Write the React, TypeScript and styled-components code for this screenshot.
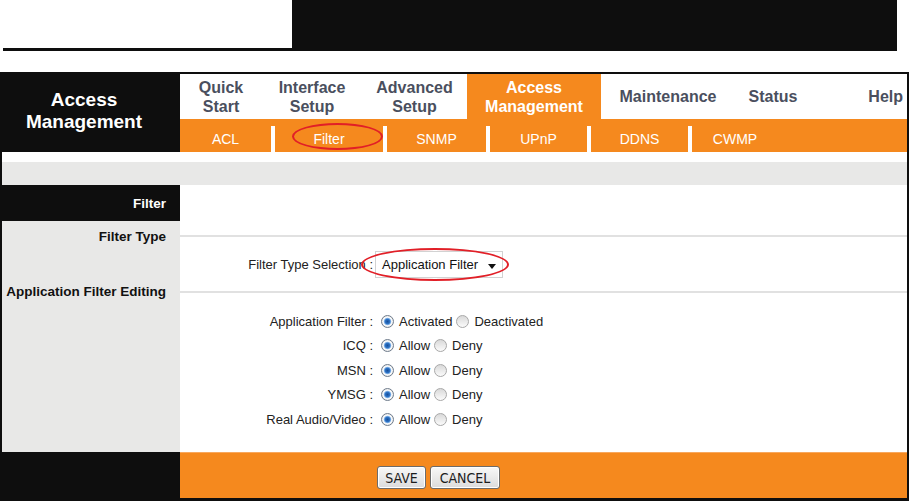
import React from "react";
import styled, { createGlobalStyle } from "styled-components";

const black = "#0e0e0e";
const orange = "#f5891e";
const panelGrey = "#e8e8e7";
const ruleGrey = "#e1e1e1";
const tabText = "#4a4f5e";
const red = "#e11f27";

const GlobalStyle = createGlobalStyle`
  body {
    margin: 0;
    background: #fff;
    font-family: "Liberation Sans", Arial, sans-serif;
  }
`;

const Page = styled.div`
  width: 910px;
  height: 501px;
  overflow: hidden;
`;

const Banner = styled.div`
  display: flex;
  height: 48px;
`;

const BannerBlank = styled.div`
  width: 292px;
`;

const BannerBlock = styled.div`
  width: 605px;
  background: ${black};
`;

const BannerRule = styled.div`
  margin: 0 0 21px 3px;
  width: 894px;
  height: 3px;
  background: ${black};
`;

const Frame = styled.div`
  width: 909px;
  box-sizing: border-box;
  border: 2px solid ${black};
  border-bottom-width: 3px;
`;

const Header = styled.div`
  display: grid;
  grid-template-columns: 178px 1fr;
  grid-template-rows: 45px 33px;
`;

const Title = styled.div`
  grid-row: 1 / 3;
  background: ${black};
  color: #fff;
  font-weight: bold;
  font-size: 19px;
  line-height: 22px;
  text-align: center;
  display: flex;
  align-items: center;
  justify-content: center;
  padding: 0 14px 4px 0;
`;

const TabBar = styled.div`
  display: flex;
`;

const Tab = styled.div<{ $width?: number; $active?: boolean; $end?: boolean }>`
  ${({ $width }) => ($width ? `width: ${$width}px;` : "flex: 1;")}
  display: flex;
  align-items: center;
  justify-content: ${({ $end }) => ($end ? "flex-end" : "center")};
  padding-right: ${({ $end }) => ($end ? "4px" : "0")};
  background: ${({ $active }) => ($active ? orange : "#fff")};
  color: ${({ $active }) => ($active ? "#fff" : tabText)};
  font-weight: bold;
  font-size: 16px;
  line-height: 19px;
  text-align: center;
`;

const SubBar = styled.div`
  display: flex;
  background: ${orange};
`;

const SubTab = styled.div<{ $width: number }>`
  position: relative;
  width: ${({ $width }) => $width}px;
  box-sizing: border-box;
  padding-top: 6px;
  display: flex;
  align-items: center;
  justify-content: center;
  color: #fff;
  font-size: 14px;
`;

const SubDivider = styled.div`
  width: 4px;
  height: 26px;
  align-self: flex-end;
  background: #fff;
`;

const Highlight = styled.div<{ $left: number; $top: number; $w: number; $h: number }>`
  position: absolute;
  left: ${({ $left }) => $left}px;
  top: ${({ $top }) => $top}px;
  width: ${({ $w }) => $w}px;
  height: ${({ $h }) => $h}px;
  box-sizing: border-box;
  border: 2.5px solid ${red};
  border-radius: 50%;
  pointer-events: none;
`;

const Spacer = styled.div`
  height: 10px;
`;

const Band = styled.div`
  height: 23px;
  background: ${panelGrey};
`;

const Row = styled.div<{ $height?: number }>`
  display: grid;
  grid-template-columns: 178px 1fr;
  ${({ $height }) => ($height ? `height: ${$height}px;` : "")}
`;

const SideCell = styled.div<{ $dark?: boolean }>`
  background: ${({ $dark }) => ($dark ? black : panelGrey)};
  color: ${({ $dark }) => ($dark ? "#fff" : "#111")};
  font-weight: bold;
  font-size: 13.5px;
  display: flex;
  align-items: center;
  justify-content: flex-end;
  padding-right: 14px;
  white-space: nowrap;
`;

const MainCell = styled.div`
  display: flex;
  align-items: center;
  background: #fff;
`;

const Rule = styled.div`
  flex: 1;
  height: 2px;
  background: ${ruleGrey};
`;

const Form = styled.div`
  padding: 4px 0 20.5px;
  background: #fff;
`;

const Field = styled.div<{ $height?: number }>`
  display: grid;
  grid-template-columns: 193px 1fr;
  height: ${({ $height }) => $height ?? 24.5}px;
  align-items: center;
  font-size: 13px;
  color: #222;
`;

const FieldLabel = styled.div`
  text-align: right;
  white-space: nowrap;
`;

const FieldValue = styled.div<{ $indent: number }>`
  display: flex;
  align-items: center;
  padding-left: ${({ $indent }) => $indent}px;
`;

const Dropdown = styled.div`
  position: relative;
  width: 128px;
  height: 27px;
  box-sizing: border-box;
  border: 1px solid #d2d2d2;
  display: flex;
  align-items: center;
  justify-content: space-between;
  padding: 0 6px;
  font-size: 13px;
  color: #111;
`;

const Caret = styled.span`
  width: 0;
  height: 0;
  border-left: 4px solid transparent;
  border-right: 4px solid transparent;
  border-top: 5px solid #111;
  margin-top: 3px;
`;

const Option = styled.label`
  display: inline-flex;
  align-items: center;
  margin-right: 4px;
  white-space: nowrap;
`;

const RadioDot = styled.span<{ $checked?: boolean }>`
  width: 13px;
  height: 13px;
  box-sizing: border-box;
  border-radius: 50%;
  margin-right: 5px;
  border: 1px solid ${({ $checked }) => ($checked ? "#6f7c8c" : "#a8a8a8")};
  background: ${({ $checked }) =>
    $checked
      ? "radial-gradient(circle, #174f9a 0, #2f74c6 2.4px, #8dbbec 3.4px, #fdfdfd 4.2px, #e2e2e2 6px)"
      : "linear-gradient(#d9d9d9, #fbfbfb)"};
`;

const FooterSide = styled.div`
  background: ${black};
`;

const FooterMain = styled.div`
  background: ${orange};
  border-top: 1px solid #f8a85e;
  display: flex;
  align-items: center;
  gap: 4px;
  padding: 4px 0 0 197px;
`;

const Button = styled.button<{ $width: number }>`
  width: ${({ $width }) => $width}px;
  height: 23px;
  padding: 0;
  border: 1px solid #6c6c6c;
  border-radius: 3px;
  background: linear-gradient(#f8f8f8, #dcdcdc);
  box-shadow: inset 0 0 0 1px #fff;
  font-family: "Liberation Sans Narrow", "DejaVu Sans Condensed", "Liberation Sans", sans-serif;
  font-stretch: condensed;
  font-size: 14px;
  color: #1c1c1c;
`;

type RadioRow = { label: string; options: [string, string] };

const radioRows: RadioRow[] = [
  { label: "Application Filter :", options: ["Activated", "Deactivated"] },
  { label: "ICQ :", options: ["Allow", "Deny"] },
  { label: "MSN :", options: ["Allow", "Deny"] },
  { label: "YMSG :", options: ["Allow", "Deny"] },
  { label: "Real Audio/Video :", options: ["Allow", "Deny"] },
];

const App = () => {
  return (
    <Page>
      <GlobalStyle />
      <Banner>
        <BannerBlank />
        <BannerBlock />
      </Banner>
      <BannerRule />

      <Frame>
        <Header>
          <Title>
            Access
            <br />
            Management
          </Title>
          <TabBar>
            <Tab $width={82}>Quick<br />Start</Tab>
            <Tab $width={100}>Interface<br />Setup</Tab>
            <Tab $width={105}>Advanced<br />Setup</Tab>
            <Tab $width={134} $active>Access<br />Management</Tab>
            <Tab $width={134}>Maintenance</Tab>
            <Tab $width={76}>Status</Tab>
            <Tab $end>Help</Tab>
          </TabBar>
          <SubBar>
            <SubTab $width={91}>ACL</SubTab>
            <SubDivider />
            <SubTab $width={108}>
              Filter
              <Highlight $left={17} $top={4} $w={91} $h={27} />
            </SubTab>
            <SubDivider />
            <SubTab $width={99}>SNMP</SubTab>
            <SubDivider />
            <SubTab $width={97}>UPnP</SubTab>
            <SubDivider />
            <SubTab $width={97}>DDNS</SubTab>
            <SubDivider />
            <SubTab $width={86}>CWMP</SubTab>
          </SubBar>
        </Header>

        <Spacer />
        <Band />

        <Row $height={36}>
          <SideCell $dark>Filter</SideCell>
          <MainCell />
        </Row>
        <Row $height={30}>
          <SideCell>Filter Type</SideCell>
          <MainCell>
            <Rule />
          </MainCell>
        </Row>
        <Row>
          <SideCell />
          <Field $height={27}>
            <FieldLabel>Filter Type Selection :</FieldLabel>
            <FieldValue $indent={2}>
              <Dropdown>
                Application Filter
                <Caret />
                <Highlight $left={-15} $top={-4} $w={148} $h={33} />
              </Dropdown>
            </FieldValue>
          </Field>
        </Row>
        <Row $height={27}>
          <SideCell>Application Filter Editing</SideCell>
          <MainCell>
            <Rule />
          </MainCell>
        </Row>
        <Row>
          <SideCell />
          <Form>
            {radioRows.map((row) => (
              <Field key={row.label}>
                <FieldLabel>{row.label}</FieldLabel>
                <FieldValue $indent={8}>
                  <Option>
                    <RadioDot $checked />
                    {row.options[0]}
                  </Option>
                  <Option>
                    <RadioDot />
                    {row.options[1]}
                  </Option>
                </FieldValue>
              </Field>
            ))}
          </Form>
        </Row>

        <Row $height={46}>
          <FooterSide />
          <FooterMain>
            <Button $width={49}>SAVE</Button>
            <Button $width={70}>CANCEL</Button>
          </FooterMain>
        </Row>
      </Frame>
    </Page>
  );
};

export default App;
